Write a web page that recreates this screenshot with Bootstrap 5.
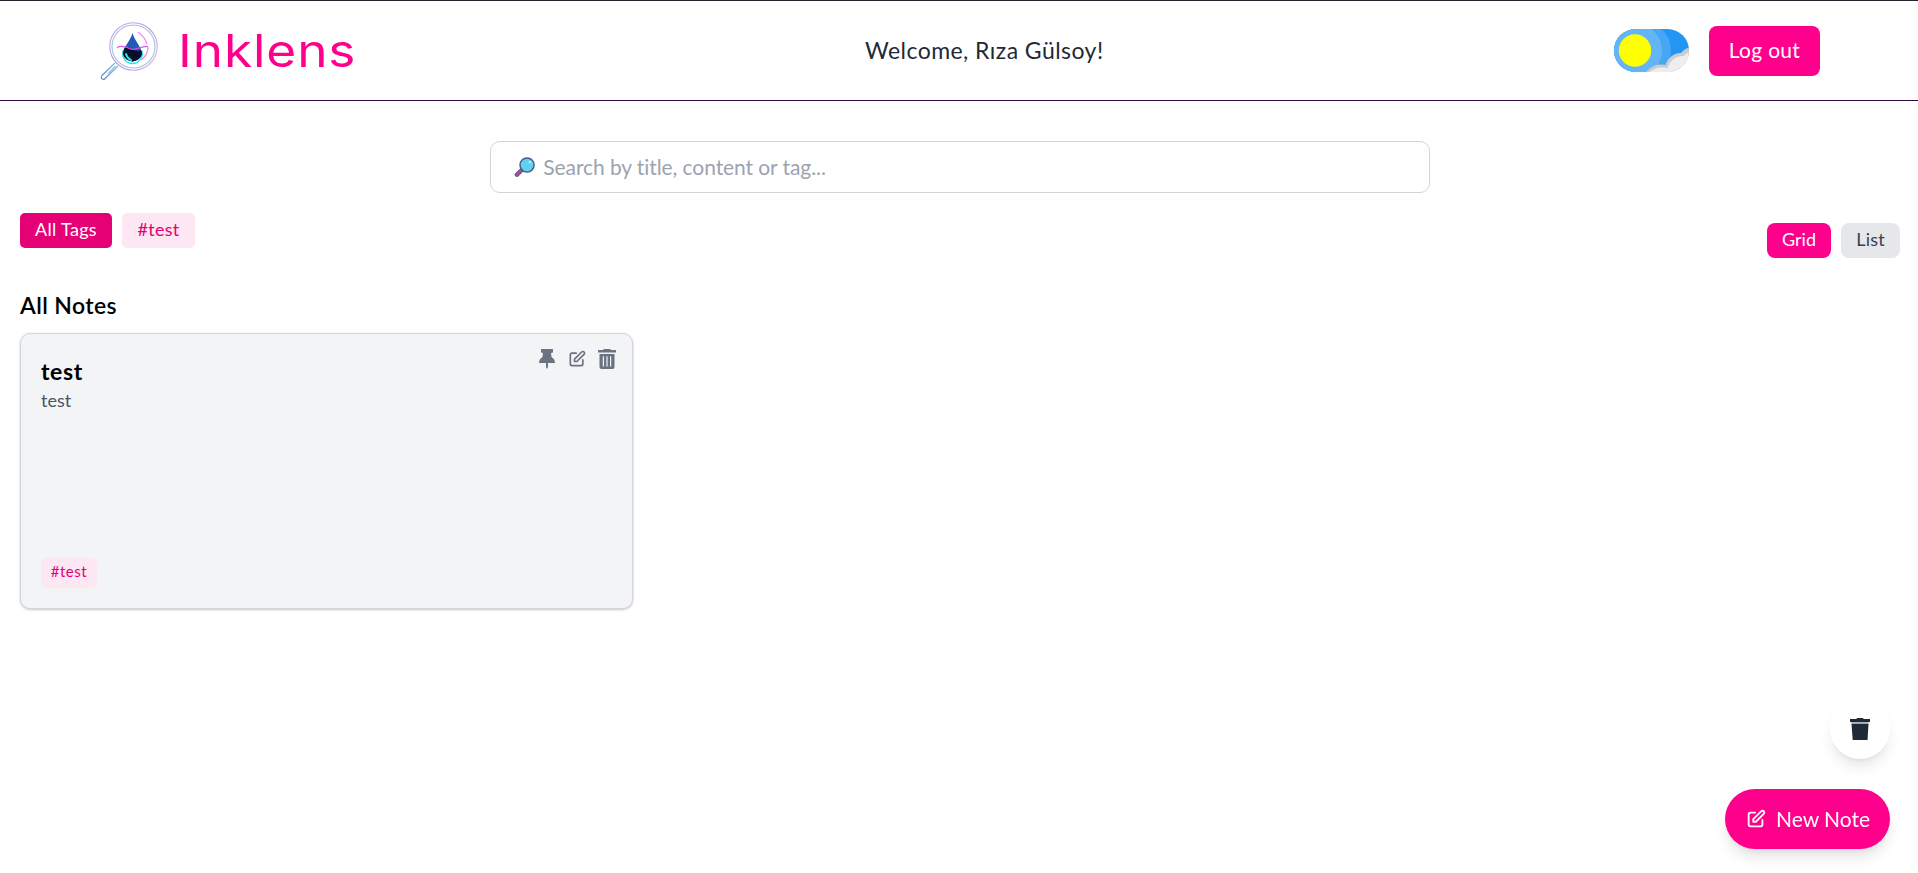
<!DOCTYPE html>
<html lang="en">
<head>
<meta charset="utf-8">
<meta name="viewport" content="width=device-width, initial-scale=1">
<title>Inklens</title>
<link href="https://cdn.jsdelivr.net/npm/bootstrap@5.3.0/dist/css/bootstrap.min.css" rel="stylesheet">
<style>
  body { font-family: Lato, "Open Sans", sans-serif; background: #fff; color: #000; min-height: 100vh; overflow: hidden; }
  .site-header { height: 101px; border-top: 1px solid #252530; border-bottom: 1px solid #2d0a45; padding: 0 98px 0 100px; }
  .header-start { width: 765px; }
  .brand-name { font-family: Inter, sans-serif; font-weight: 400; font-size: 45px; line-height: 50px; color: #ff008c; letter-spacing: .8px; margin-left: 18px; margin-top: 1px; transform: scaleX(1.14); transform-origin: left; }
  .welcome { font-size: 23px; line-height: 32px; color: #1f2937; letter-spacing: .45px; margin-top: -2px; }
  .btn-pink { --bs-btn-color: #fff; --bs-btn-bg: #ff008c; --bs-btn-hover-bg: #e60076; --bs-btn-hover-color: #fff; --bs-btn-border-width: 0; border: 0; }
  .btn-logout { width: 111px; height: 50px; border-radius: 8px; font-size: 21px; padding: 0 0 1px; letter-spacing: .3px; }
  .search-box { width: 940px; height: 52px; border: 1px solid #d1d5db; border-radius: 10px; margin-top: 40px; padding: 0 23px; left: 1px; }
  .search-box input { font-size: 21px; letter-spacing: -.08px; line-height: 28px; margin-top: -1px; }
  .search-box input::placeholder { color: #9ca3af; opacity: 1; }
  .pill { height: 35px; border-radius: 5px; padding: 0 0 2px; font-size: 18px; line-height: 33px; border: 0; }
  .pill-view { border-radius: 8px; }
  .tag-active { width: 92px; background: #e60076; color: #fff; letter-spacing: .3px; }
  .tag-soft { background: #fce7f3; color: #e60076; letter-spacing: .3px; }
  .view-off { width: 59px; background: #e5e7eb; color: #374151; letter-spacing: .2px; }
  .section-title { font-size: 23px; line-height: 28px; font-weight: 600; letter-spacing: .4px; margin: 33px 0 14px; }
  .note { width: 613px; height: 276px; background: #f3f4f6; border: 1px solid #d1d5db; border-radius: 10px; padding: 20px; box-shadow: 0 1px 3px rgba(0,0,0,.12), 0 1px 2px rgba(0,0,0,.1); }
  .note-title { font-size: 23px; line-height: 28px; font-weight: 700; letter-spacing: .6px; margin: 3px 0 0; }
  .note-text { font-size: 18px; line-height: 28px; color: #4b5563; margin: 1px 0 0; }
  .note-tag { width: 56px; height: 30px; border-radius: 6px; font-size: 15px; line-height: 27px; letter-spacing: .5px; }
  .note-tools { gap: 10px; margin: -5px -5px 0 0; height: 20px; }
  .floaters { right: 28px; bottom: 24px; gap: 30px; }
  .trash-btn { width: 60px; height: 60px; background: #fff; border: 0; box-shadow: 0 10px 15px -3px rgba(0,0,0,.1), 0 4px 6px -4px rgba(0,0,0,.1); }
  .btn-new { width: 165px; height: 60px; font-size: 21px; padding: 0 0 1px; gap: 9px; box-shadow: 0 10px 15px -3px rgba(0,0,0,.12), 0 4px 6px -4px rgba(0,0,0,.1); }
</style>
</head>
<body class="position-relative">
<header class="site-header d-flex align-items-center">
  <div class="header-start d-flex align-items-center">
    <svg width="60" height="60" viewBox="0 0 60 60" fill="none" aria-hidden="true" style="margin-top:2px">
      <defs>
        <linearGradient id="ring" x1="0" y1="0" x2="1" y2="1"><stop stop-color="#e0a8e6"/><stop offset=".45" stop-color="#ad9ede"/><stop offset="1" stop-color="#efb6e3"/></linearGradient>
        <linearGradient id="handle" x1="0" y1="1" x2="1" y2="0"><stop stop-color="#6a87c8"/><stop offset="1" stop-color="#7bc9e9"/></linearGradient>
        <clipPath id="drop"><path d="M32.500 11C30 20 23 25 23 32A9.800 9.800 0 0 0 42 32C42 25 35 20 32.500 11Z"/></clipPath>
      </defs>
      <circle cx="33.500" cy="24.500" r="23.700" stroke="url(#ring)" stroke-width="1.100"/>
      <circle cx="33.500" cy="24.500" r="21.500" stroke="#9fc3e4" stroke-width="1.100"/>
      <path d="M15 41 2 53.500Q0 57 4 57.500L18 44" stroke="url(#handle)" stroke-width="1.300"/>
      <path d="M15.500 44 8 51.500" stroke="#6287cc" stroke-width="1"/>
      <path d="M23 29A9.800 10 0 1 0 42 29" stroke="#28e4e8" stroke-width="1.500"/>
      <g clip-path="url(#drop)"><path d="M20 9H45V44H20Z" fill="#245ab7"/><path d="M20 26Q26 23 32 27T45 26V44H20Z" fill="#07102b"/></g>
      <path d="M17 25.500C22 23 27 25 31 27S40 24 48 24.500" stroke="#e052e7" stroke-width="1.200"/>
      <path d="M38 10Q45 15 47 22M48 25Q48 33 41 38" stroke="#ef91eb" stroke-width="1.400"/>
      <path d="M26 32Q27 36 31 38" stroke="#30ece8" stroke-width="1.900" stroke-linecap="round"/>
    </svg>
    <span class="brand-name">Inklens</span>
  </div>
  <span class="welcome text-nowrap">Welcome, Rıza Gülsoy!</span>
  <div class="flex-grow-1 d-flex align-items-center justify-content-end gap-3">
    <svg width="75" height="43" viewBox="0 0 75 43" role="img" aria-label="Light theme" style="margin-right:4px">
      <defs><clipPath id="switch"><rect width="75" height="43" rx="21.500"/></clipPath></defs>
      <g clip-path="url(#switch)">
        <path d="M0 0H75V43H0Z" fill="#2196f3"/>
        <circle cx="28.500" cy="21.500" r="28.500" fill="#47a7f5"/>
        <circle cx="21" cy="21.500" r="27" fill="#64b5f6"/>
        <g fill="#ccc"><circle cx="47" cy="54" r="18.500"/><circle cx="67" cy="40" r="16"/><circle cx="79" cy="33" r="15"/></g>
        <g fill="#eee"><circle cx="48" cy="57" r="18.500"/><circle cx="69" cy="43" r="16"/><circle cx="81" cy="37" r="15"/></g>
      </g>
      <circle cx="21" cy="21.500" r="16.200" fill="#ff0"/>
    </svg>
    <button class="btn btn-pink btn-logout">Log out</button>
  </div>
</header>
<main class="px-3">
  <label class="search-box position-relative d-flex align-items-center mx-auto">
    <svg width="22" height="22" viewBox="0 0 22 22" fill="none" aria-hidden="true">
      <path d="m3 19 6-6" stroke="#75437e" stroke-width="4.500" stroke-linecap="round"/><path d="m3 19 4-4" stroke="#9d599e" stroke-width="2.500" stroke-linecap="round"/>
      <circle cx="13.500" cy="9" r="7.300" fill="#61d0ed" stroke="#405b8e" stroke-width="1.500"/><circle cx="16.500" cy="6" r="1.500" fill="#a8ebf7"/>
    </svg>
    <input class="form-control border-0 bg-transparent shadow-none p-0 ms-2" type="text" placeholder="Search by title, content or tag...">
  </label>
  <div class="d-flex justify-content-between px-1" style="padding-top:20px">
    <div class="d-flex" style="gap:10px"><button class="pill tag-active">All Tags</button><button class="pill tag-soft" style="width:73px">#test</button></div>
    <div class="d-flex" style="gap:10px;margin-top:10px;margin-right:-2px"><button class="btn btn-pink pill pill-view" style="width:64px">Grid</button><button class="pill pill-view view-off">List</button></div>
  </div>
  <section class="px-1">
    <h2 class="section-title">All Notes</h2>
    <article class="note d-flex flex-column">
      <div class="d-flex justify-content-between align-items-start">
        <h3 class="note-title">test</h3>
        <div class="note-tools d-flex align-items-center">
          <svg width="20" height="20" viewBox="0 0 20 20" fill="#6b7280"><path d="M4.500 0H15.500Q16 0 16 .5V3Q16 4 14 4L14.500 8Q18 10 18 14H11V18L10 20 9 18V14H2Q2 10 5.500 8L6 4Q4 4 4 3V.5Q4 0 4.500 0Z"/></svg>
          <svg width="20" height="20" viewBox="0 0 24 24" fill="none" stroke="#6b7280" stroke-width="2" stroke-linecap="round" stroke-linejoin="round"><path d="M11 5H6a2 2 0 0 0-2 2v11a2 2 0 0 0 2 2h11a2 2 0 0 0 2-2v-5m-1.414-9.414a2 2 0 1 1 2.828 2.828L11.828 15H9v-2.828l8.586-8.586z"/></svg>
          <svg width="20" height="20" viewBox="0 0 20 20" fill="#6b7280"><path d="M1.500 1H6L7 0H13L14 1H18.500Q19 1 19 1.500V3.500H1V1.500Q1 1 1.500 1Z"/><path fill-rule="evenodd" d="M2.500 5H17.500V18Q17.500 20 15.500 20H4.500Q2.500 20 2.500 18ZM5.800 7.300V17.500H7V7.300ZM9.400 7.300V17.500H10.600V7.300ZM13 7.300V17.500H14.200V7.300Z"/></svg>
        </div>
      </div>
      <p class="note-text">test</p>
      <span class="note-tag tag-soft text-center mt-auto">#test</span>
    </article>
  </section>
</main>
<div class="floaters position-fixed d-flex flex-column align-items-end">
  <button class="trash-btn rounded-circle d-flex align-items-center justify-content-center" aria-label="Trash">
    <svg width="20" height="22" viewBox="0 0 20 22" fill="#1f2937"><path d="M0 1H6Q7 0 8 0H12Q13 0 14 1H20V4H0Z"/><path d="M1.500 5.500H18.500L17.500 22H2.700Z"/><path d="M1.500 4H18.500V5.500H1.500Z" fill="#aeb3b9"/></svg>
  </button>
  <button class="btn btn-pink btn-new rounded-pill d-flex align-items-center justify-content-center">
    <svg width="22" height="22" viewBox="0 0 24 24" fill="none" stroke="#fff" stroke-width="2" stroke-linecap="round" stroke-linejoin="round"><path d="M11 5H6a2 2 0 0 0-2 2v11a2 2 0 0 0 2 2h11a2 2 0 0 0 2-2v-5m-1.414-9.414a2 2 0 1 1 2.828 2.828L11.828 15H9v-2.828l8.586-8.586z"/></svg>
    New Note
  </button>
</div>
<script src="https://cdn.jsdelivr.net/npm/bootstrap@5.3.0/dist/js/bootstrap.bundle.min.js"></script>
</body>
</html>
